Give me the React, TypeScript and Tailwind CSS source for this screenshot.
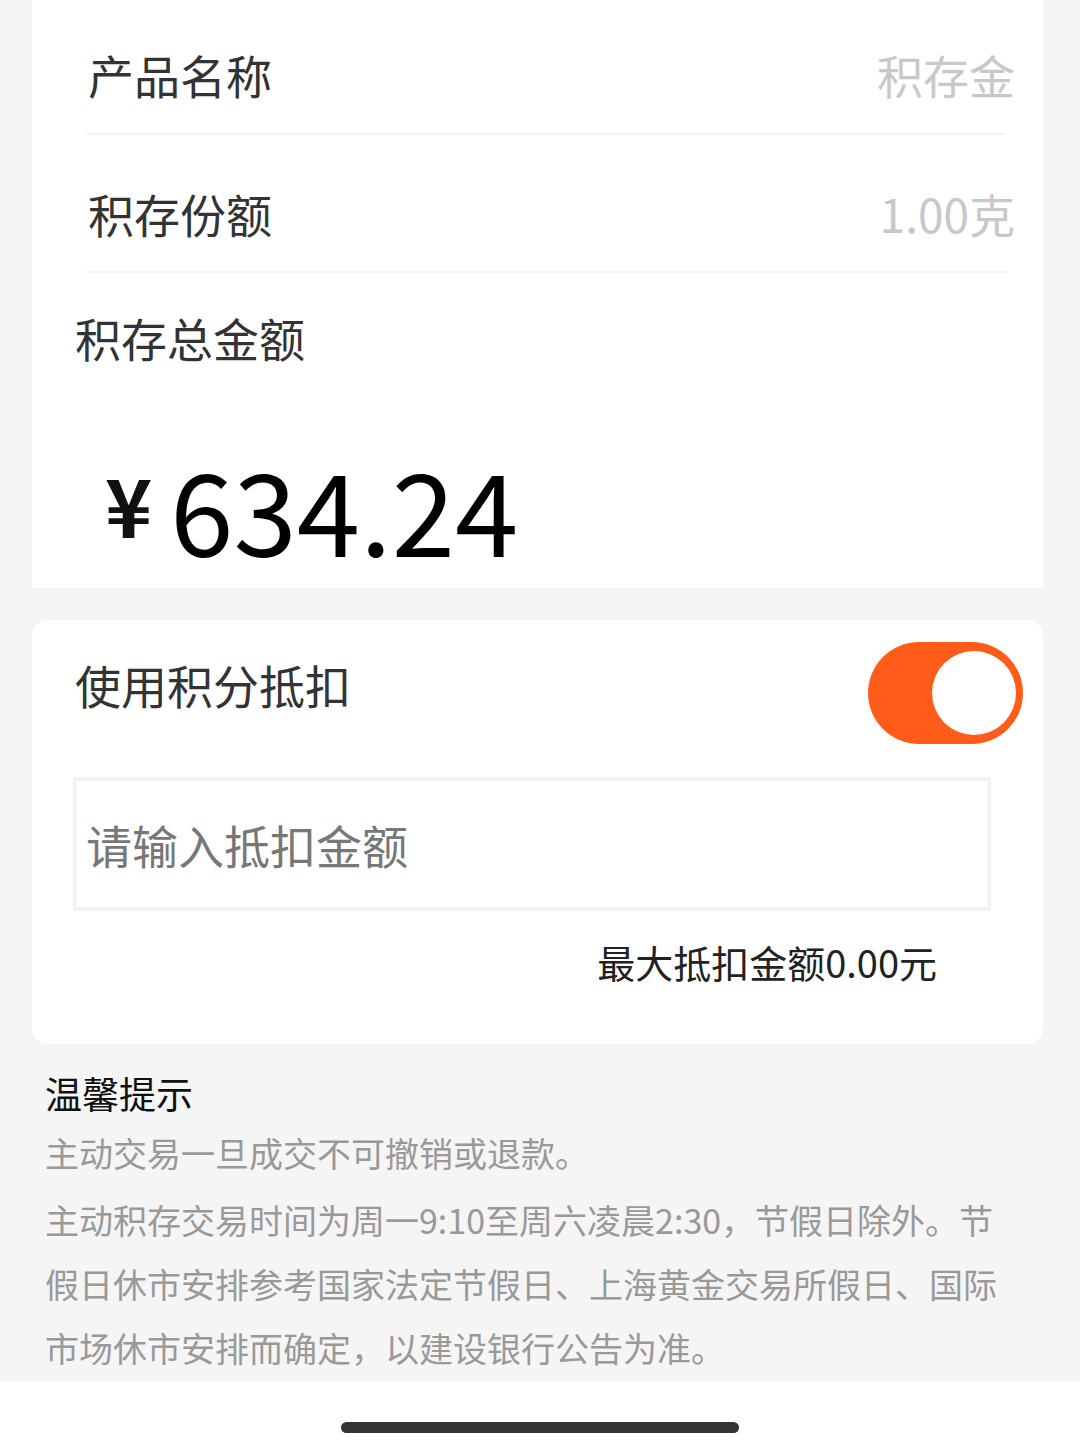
export default function App() {
  return (
    <div className="flex h-[1452px] w-[1080px] flex-col overflow-hidden bg-[#f5f5f5] font-['Noto_Sans_CJK_SC','Noto_Sans',sans-serif]">
      {/* 产品信息 */}
      <div className="ml-[32px] mr-[37px] flex flex-col bg-white">
        <div className="ml-[54px] mr-[38px] flex items-center justify-between border-b-2 border-[#f2f2f2] pb-[28px] pt-[43px]">
          <span className="pl-[2px] text-[46px] leading-[62px] text-[#333]">产品名称</span>
          <span className="-mr-[10px] text-[46px] leading-[62px] text-[#c8c8c8]">积存金</span>
        </div>
        <div className="ml-[54px] mr-[38px] flex items-center justify-between border-b-2 border-[#f2f2f2] pb-[27px] pt-[47px]">
          <span className="pl-[2px] text-[46px] leading-[62px] text-[#333]">积存份额</span>
          <span className="-mr-[10px] text-[46px] leading-[62px] text-[#c8c8c8]">1.00克</span>
        </div>
        <div className="ml-[43px] mt-[33px] text-[46px] leading-[62px] text-[#333]">积存总金额</div>
        <div className="ml-[73px] mt-[72px] flex h-[148px] items-start">
          <span className="mt-[23px] text-[80px] font-bold leading-none text-[#111]">¥</span>
          <span className="ml-[18px] mt-[11px] text-[114px] leading-none text-black">634.24</span>
        </div>
      </div>

      {/* 积分抵扣 */}
      <div className="ml-[32px] mr-[37px] mt-[32px] flex flex-col rounded-[16px] bg-white pb-[57px]">
        <div className="flex items-start justify-between">
          <span className="ml-[43px] mt-[33px] text-[46px] leading-[62px] text-[#333]">使用积分抵扣</span>
          <div className="mr-[20px] mt-[22px] flex h-[102px] w-[155px] items-center justify-end rounded-full bg-[#ff5c1a] pr-[7px]">
            <div className="h-[84px] w-[84px] rounded-full bg-white" />
          </div>
        </div>
        <div className="ml-[41px] mr-[52px] mt-[33px] flex h-[134px] items-center border-4 border-[#f3f3f3] pl-[9px]">
          <span className="text-[46px] leading-[62px] text-[#777]">请输入抵扣金额</span>
        </div>
        <div className="mr-[106px] mt-[26px] self-end text-[38px] leading-[50px] text-[#222]">最大抵扣金额0.00元</div>
      </div>

      {/* 温馨提示 */}
      <div className="flex flex-col px-[45px] pt-[24px]">
        <div className="text-[37px] leading-[50px] text-[#111]">温馨提示</div>
        <p className="mt-[3px] text-[34px] leading-[64px] text-[#999]">主动交易一旦成交不可撤销或退款。</p>
        <p className="mt-[3px] w-[962px] text-[34px] leading-[64px] text-[#999]">
          主动积存交易时间为周一9:10至周六凌晨2:30，节假日除外。节假日休市安排参考国家法定节假日、上海黄金交易所假日、国际市场休市安排而确定，以建设银行公告为准。
        </p>
      </div>

      <div className="mt-auto flex h-[70px] items-start justify-center bg-white pt-[40px]">
        <div className="h-[11px] w-[398px] rounded-full bg-[#333]" />
      </div>
    </div>
  )
}
